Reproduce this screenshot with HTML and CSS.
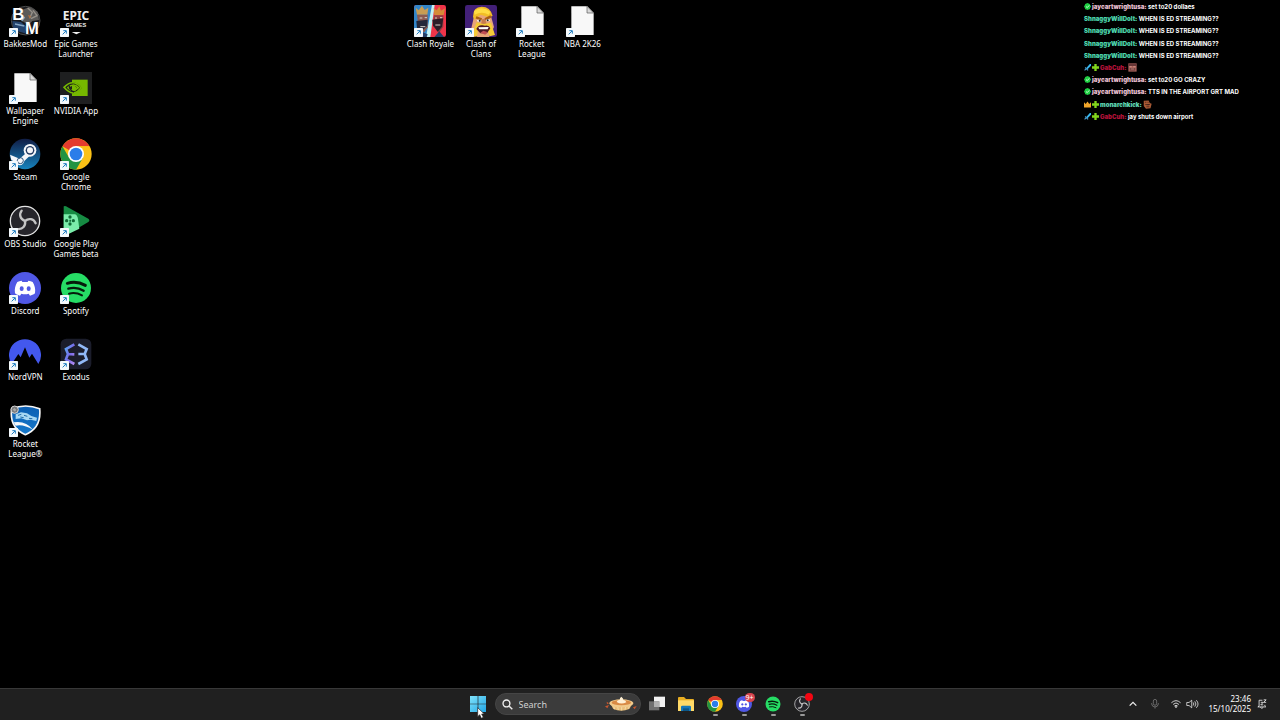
FILE: index.html
```
<!DOCTYPE html>
<html lang="en">
<head>
  <meta charset="utf-8">
  <title>Desktop</title>
  <link rel="stylesheet" href="styles.css">
</head>
<body>
  <!-- Shared icons -->
  <svg class="sprite" aria-hidden="true">
    <symbol id="shortcut" viewBox="0 0 27 27">
      <rect width="27" height="27" rx="2" fill="#f4f9fc"/>
      <path d="M8 19L18 9M10 8h9v9" fill="none" stroke="#1c7cc0" stroke-width="3"/>
    </symbol>
    <symbol id="file" viewBox="0 0 96 96">
      <path d="M16 4h48l19 19v67H16z" fill="#f8f8f8"/>
      <path d="M63 4v20h20z" fill="#d9d9d9" stroke="#555" stroke-width="2"/>
    </symbol>
    <symbol id="chrome" viewBox="0 0 96 96">
      <circle cx="48" cy="48" r="47" fill="#fbc116"/>
      <path d="M48 48L7.300 24.500A47 47 0 0 1 88.700 24.500H48z" fill="#e33b2e"/>
      <path d="M7.300 24.500A47 47 0 0 0 48 95L68.400 59.800 48 48 27.600 59.800z" fill="#229342"/>
      <path d="M48 24.500h40.700L68.400 59.800 48 48z" fill="#fbc116"/>
      <circle cx="48" cy="48" r="24" fill="#fff"/>
      <circle cx="48" cy="48" r="19" fill="#2b7de9"/>
    </symbol>
    <symbol id="discord" viewBox="0 0 96 96">
      <circle cx="48" cy="48" r="48" fill="#5058e5"/>
      <path d="M38 26c-5 1-9 2-13 4-6 10-9 20-7 34 5 4 10 6 15 7l4-6c7 2 15 2 22 0l4 6c5-1 10-3 15-7 2-14-1-24-7-34-4-2-8-3-13-4l-2 4h-16z" fill="#fff"/>
      <ellipse cx="38" cy="50" rx="6" ry="7" fill="#5058e5"/>
      <ellipse cx="59" cy="50" rx="6" ry="7" fill="#5058e5"/>
    </symbol>
    <symbol id="spotify" viewBox="0 0 96 96">
      <circle cx="48" cy="48" r="45" fill="#26dd65"/>
      <g fill="none" stroke="#061b0c" stroke-linecap="round">
        <path d="M22 34q28-8 54 6" stroke-width="9"/>
        <path d="M25 50q24-7 46 6" stroke-width="7"/>
        <path d="M27 65q20-5 39 5" stroke-width="6"/>
      </g>
    </symbol>
    <symbol id="obs" viewBox="0 0 96 96">
      <circle cx="48" cy="48" r="44" fill="#26252a" stroke="#e4e4e4" stroke-width="4"/>
      <g fill="none" stroke="#c4c4c4" stroke-width="7" stroke-linecap="round">
        <path id="blade" d="M48 48C34 43 29 29 38 17"/>
        <use href="#blade" transform="rotate(120 48 48)"/>
        <use href="#blade" transform="rotate(240 48 48)"/>
      </g>
    </symbol>
    <symbol id="verified" viewBox="0 0 12 12">
      <path d="M6 0l2 1 2 .5.500 2L12 6l-1.500 2.500-.5 2-2 .5-2 1-2-1-2-.5-.5-2L0 6l1.500-2.500.5-2L4 1z" fill="#1fcf43"/>
      <path d="M3.500 6l2 2 3.500-4" fill="none" stroke="#d9ffe0" stroke-width="1.500"/>
    </symbol>
    <symbol id="sword" viewBox="0 0 12 12">
      <path d="M12 0v3L6 9 4 7l6-7z" fill="#37b9f2"/>
      <path d="M2 6l5 5M4 8l-3 3" fill="none" stroke="#4a9ed0" stroke-width="2"/>
    </symbol>
    <symbol id="plus" viewBox="0 0 12 12">
      <path d="M4 0h4v4h4v4H8v4H4V8H0V4h4z" fill="#82d51c"/>
    </symbol>
    <symbol id="crown" viewBox="0 0 12 12">
      <path d="M0 2l3 3 3-4 3 4 3-3v9H0z" fill="#f0a52a"/>
    </symbol>
  </svg>

  <main class="desktop">
    <nav class="icons" aria-label="Desktop shortcuts">
      <a class="app col-1 row-1" href="#">
        <span class="app-icon">
          <svg viewBox="0 0 96 96">
            <circle cx="50" cy="47" r="43" fill="#17191d" stroke="#4b4b4b" stroke-width="3"/>
            <path d="M40 14l22-8 24 14 4 25-20 3-12 12-18-12z" fill="#5c5a58"/>
            <path d="M56 9l14 13-8 18M72 16l12 16-18 9" fill="none" stroke="#96918a" stroke-width="4"/>
            <path d="M10 48l26 3 18 16-6 18-34-10z" fill="#24436c"/>
            <path d="M18 57l28 6M38 48l9-12" stroke="#85a6c4" stroke-width="4"/>
            <path d="M57 30l9 3-4 8z" fill="#b36c39"/>
            <text class="bm" x="10" y="46">B</text>
            <text class="bm" x="48" y="87">M</text>
          </svg>
          <svg class="badge"><use href="#shortcut"/></svg>
        </span>
        <span class="app-name">BakkesMod</span>
      </a>
      <a class="app col-1 row-2" href="#">
        <span class="app-icon">
          <svg><use href="#file"/></svg>
          <svg class="badge"><use href="#shortcut"/></svg>
        </span>
        <span class="app-name">Wallpaper<br>Engine</span>
      </a>
      <a class="app col-1 row-3" href="#">
        <span class="app-icon">
          <svg viewBox="0 0 96 96">
            <defs>
              <linearGradient id="steam-bg" x2="0" y2="1">
                <stop stop-color="#111d45"/>
                <stop offset="1" stop-color="#1683bd"/>
              </linearGradient>
            </defs>
            <circle cx="48" cy="48" r="46" fill="url(#steam-bg)"/>
            <path d="M3 50l29 12 17-15 15 5-18 17c-2 14-19 17-25 5L7 66z" fill="#f5f7fa"/>
            <circle cx="63" cy="37" r="19" fill="#f5f7fa"/>
            <circle cx="63" cy="37" r="13" fill="#243c63"/>
            <circle cx="63" cy="37" r="9" fill="#f5f7fa"/>
            <circle cx="34" cy="68" r="9" fill="none" stroke="#28517b" stroke-width="3"/>
          </svg>
          <svg class="badge"><use href="#shortcut"/></svg>
        </span>
        <span class="app-name">Steam</span>
      </a>
      <a class="app col-1 row-4" href="#">
        <span class="app-icon">
          <svg><use href="#obs"/></svg>
          <svg class="badge"><use href="#shortcut"/></svg>
        </span>
        <span class="app-name">OBS Studio</span>
      </a>
      <a class="app col-1 row-5" href="#">
        <span class="app-icon">
          <svg><use href="#discord"/></svg>
          <svg class="badge"><use href="#shortcut"/></svg>
        </span>
        <span class="app-name">Discord</span>
      </a>
      <a class="app col-1 row-6" href="#">
        <span class="app-icon">
          <svg viewBox="0 0 96 96">
            <path d="M8 78A48 48 0 1 1 88 78L69 47l-8 12-13-31-13 30-7-10z" fill="#4358ee"/>
          </svg>
          <svg class="badge"><use href="#shortcut"/></svg>
        </span>
        <span class="app-name">NordVPN</span>
      </a>
      <a class="app col-1 row-7" href="#">
        <span class="app-icon">
          <svg viewBox="0 0 96 96">
            <defs>
              <linearGradient id="shield" x2="0" y2="1">
                <stop stop-color="#0b5eb2"/>
                <stop offset="1" stop-color="#1679cb"/>
              </linearGradient>
            </defs>
            <path d="M8 11Q50-5 92 11 98 69 49 89 0 68 8 11z" fill="url(#shield)" stroke="#f6f6f6" stroke-width="5"/>
            <path d="M20 28l16-6 18 3 13 8 17 5-2 10-17-4-11 2-17-6-17 2z" fill="#a6d7f3"/>
            <path d="M27 31l10-3M45 31l10 3M60 40l10 1M34 36l10 2" stroke="#216eab" stroke-width="3"/>
            <path d="M14 52q36-6 58 22-30-18-52-12z" fill="#f5f8fb"/>
            <circle cx="17" cy="14" r="11" fill="#77797b" stroke="#d5d5d5" stroke-width="3"/>
            <path d="M11 14l5-5 6 5-4 6z" fill="#aaa"/>
          </svg>
          <svg class="badge"><use href="#shortcut"/></svg>
        </span>
        <span class="app-name">Rocket<br>League®</span>
      </a>

      <a class="app col-2 row-1" href="#">
        <span class="app-icon">
          <svg viewBox="0 0 96 96">
            <text class="epic" x="48" y="46">EPIC</text>
            <text class="games" x="48" y="67">GAMES</text>
            <path d="M35 81h28l-14 7z" fill="#eee"/>
          </svg>
          <svg class="badge"><use href="#shortcut"/></svg>
        </span>
        <span class="app-name">Epic Games<br>Launcher</span>
      </a>
      <a class="app col-2 row-2" href="#">
        <span class="app-icon">
          <svg viewBox="0 0 96 96">
            <rect width="96" height="96" fill="#1e1f20"/>
            <path d="M36 23h47v49H36z" fill="#76b900"/>
            <path d="M36 31c14 0 24 8 29 17-7 9-17 16-29 16zM36 39v17c7 0 12-4 15-8-4-6-9-9-15-9z" fill="#18220d" fill-rule="evenodd"/>
            <g fill="none" stroke="#76b900" stroke-width="5">
              <path d="M12 46q27-28 51 1-23 32-51-1z"/>
              <path d="M24 47q17-16 31 0-17 17-31 0z"/>
            </g>
            <path d="M28 41q-1 14 14 19" fill="none" stroke="#1e1f20" stroke-width="4"/>
          </svg>
          <svg class="badge"><use href="#shortcut"/></svg>
        </span>
        <span class="app-name">NVIDIA App</span>
      </a>
      <a class="app col-2 row-3" href="#">
        <span class="app-icon">
          <svg><use href="#chrome"/></svg>
          <svg class="badge"><use href="#shortcut"/></svg>
        </span>
        <span class="app-name">Google<br>Chrome</span>
      </a>
      <a class="app col-2 row-4" href="#">
        <span class="app-icon">
          <svg viewBox="0 0 96 96">
            <path d="M11 5q2-3 7-1l67 37q6 5 0 10L19 90q-7 2-8-5z" fill="#168b43"/>
            <path d="M11 28h34q7 2 9 14l4 29-39 19q-8 1-8-6z" fill="#7bedab"/>
            <g fill="#116a37">
              <circle cx="30" cy="36" r="5"/>
              <circle cx="20" cy="47" r="5"/>
              <circle cx="40" cy="47" r="5"/>
              <circle cx="30" cy="57" r="5"/>
              <path d="M28 44h5v6h-5z"/>
            </g>
          </svg>
          <svg class="badge"><use href="#shortcut"/></svg>
        </span>
        <span class="app-name">Google Play<br>Games beta</span>
      </a>
      <a class="app col-2 row-5" href="#">
        <span class="app-icon">
          <svg><use href="#spotify"/></svg>
          <svg class="badge"><use href="#shortcut"/></svg>
        </span>
        <span class="app-name">Spotify</span>
      </a>
      <a class="app col-2 row-6" href="#">
        <span class="app-icon">
          <svg viewBox="0 0 96 96">
            <defs>
              <linearGradient id="exodus" x2="1" y2="1">
                <stop stop-color="#5aa9f3"/>
                <stop offset=".5" stop-color="#796be9"/>
                <stop offset="1" stop-color="#b48cf5"/>
              </linearGradient>
            </defs>
            <rect x="2" y="2" width="92" height="92" rx="17" fill="#1b1d2b"/>
            <g fill="none" stroke-width="8">
              <path d="M43 19L18 33l6 15-6 16 25 14M24 48l19 1" stroke="url(#exodus)"/>
              <path d="M55 19l25 14-6 15 6 16-25 14M74 48H55" stroke="#91b8f6"/>
            </g>
          </svg>
          <svg class="badge"><use href="#shortcut"/></svg>
        </span>
        <span class="app-name">Exodus</span>
      </a>

      <a class="app col-9 row-1" href="#">
        <span class="app-icon">
          <svg viewBox="0 0 96 96">
            <rect width="96" height="96" rx="7" fill="#ee3449"/>
            <path d="M0 7q0-7 7-7h48L38 96H7q-7 0-7-7z" fill="#3386c8"/>
            <path d="M54 0h8L49 96H36z" fill="#c2f2f3"/>
            <path d="M5 8l9 8 10-14 8 13 11-7-3 21H9z" fill="#c99d52"/>
            <path d="M9 29h32v38L31 82 14 74z" fill="#8b5a50"/>
            <path d="M7 48l34-4-2 20-12 10-18-5z" fill="#242738"/>
            <path d="M17 39h8M32 38h7M19 65h15" stroke="#d8d0c8" stroke-width="3"/>
            <path d="M59 9l9 7 8-12 5 13 12-7-4 20H61z" fill="#d58b38"/>
            <path d="M60 31h28v34L75 84 57 64z" fill="#8e4040"/>
            <path d="M55 44l33-4-4 25-13 15-14-19z" fill="#2b1c27"/>
            <path d="M63 39h6M78 38h7M64 60h15" stroke="#d8d0c8" stroke-width="3"/>
            <path d="M16 96l9-15 16 7-3 8zM61 96l15-17 14 17z" fill="#243f68"/>
          </svg>
          <svg class="badge"><use href="#shortcut"/></svg>
        </span>
        <span class="app-name">Clash Royale</span>
      </a>
      <a class="app col-10 row-1" href="#">
        <span class="app-icon">
          <svg viewBox="0 0 96 96">
            <rect width="96" height="96" rx="7" fill="#432078"/>
            <path d="M19 70L28 30 49 16l27 10 11 40-15 30H37z" fill="#e8a579"/>
            <path d="M24 35Q24 5 50 5t33 28l-11 4-25-8-19 15z" fill="#f1bd26"/>
            <path d="M27 18q25-18 49 2l-5 9q-20-12-42 0z" fill="#ffdc43"/>
            <path d="M33 37l17 6M60 43l18-9" stroke="#a85c14" stroke-width="7"/>
            <ellipse cx="42" cy="47" rx="6" ry="3" fill="#fff"/>
            <ellipse cx="69" cy="46" rx="6" ry="3" fill="#fff"/>
            <circle cx="44" cy="47" r="3" fill="#222"/>
            <circle cx="68" cy="46" r="3" fill="#222"/>
            <path d="M52 42l-4 15 9 3 8-4-5-14z" fill="#c77b50"/>
            <path d="M27 72l8-20 20 5 23-4 12 37-16 4-6-19-10 2-19-2-3 19-12 2z" fill="#f5cb37"/>
            <path d="M34 72q6-14 19-11l7 1q12-3 16 8l-10 15H46z" fill="#4d1825"/>
            <path d="M40 67l31-1-3 7H43z" fill="#fff"/>
            <path d="M46 83l9-6 12 4-6 8z" fill="#c24d53"/>
          </svg>
          <svg class="badge"><use href="#shortcut"/></svg>
        </span>
        <span class="app-name">Clash of<br>Clans</span>
      </a>
      <a class="app col-11 row-1" href="#">
        <span class="app-icon">
          <svg><use href="#file"/></svg>
          <svg class="badge"><use href="#shortcut"/></svg>
        </span>
        <span class="app-name">Rocket<br>League</span>
      </a>
      <a class="app col-12 row-1" href="#">
        <span class="app-icon">
          <svg><use href="#file"/></svg>
          <svg class="badge"><use href="#shortcut"/></svg>
        </span>
        <span class="app-name">NBA 2K26</span>
      </a>
    </nav>

    <!-- Chat overlay, floats over the wallpaper -->
    <section class="chat" aria-label="Chat">
      <p><svg><use href="#verified"/></svg><b class="jay">jaycartwrightusa:</b> set to20 dollaes</p>
      <p><b class="shnaggy">ShnaggyWillDoIt:</b> WHEN IS ED STREAMING??</p>
      <p><b class="shnaggy">ShnaggyWillDoIt:</b> WHEN IS ED STREAMING??</p>
      <p><b class="shnaggy">ShnaggyWillDoIt:</b> WHEN IS ED STREAMING??</p>
      <p><b class="shnaggy">ShnaggyWillDoIt:</b> WHEN IS ED STREAMING??</p>
      <p><svg><use href="#sword"/></svg><svg><use href="#plus"/></svg><b class="gab">GabCuh:</b>
        <svg class="emote" viewBox="0 0 24 24"><path d="M1 1h22v22H1z" fill="#a8625a"/><path d="M1 2h22v6H1zM5 13h14v7H5z" fill="#673636"/><path d="M4 10h6M14 10h6M7 16h10" stroke="#e0a698" stroke-width="2"/></svg></p>
      <p><svg><use href="#verified"/></svg><b class="jay">jaycartwrightusa:</b> set to20 GO CRAZY</p>
      <p><svg><use href="#verified"/></svg><b class="jay">jaycartwrightusa:</b> TTS IN THE AIRPORT GRT MAD</p>
      <p><svg><use href="#crown"/></svg><svg><use href="#plus"/></svg><b class="monarch">monarchkick:</b>
        <svg class="emote" viewBox="0 0 24 24"><path d="M2 2l13-1 3 7 5 2-3 12-12 1-6-7z" fill="#a85a35"/><path d="M5 6h4M12 6h3M6 12l8 1 5-2M9 18h8" stroke="#40221b" stroke-width="2"/></svg></p>
      <p><svg><use href="#sword"/></svg><svg><use href="#plus"/></svg><b class="gab">GabCuh:</b> jay shuts down airport</p>
    </section>
  </main>

  <footer class="taskbar">
    <div class="pinned">
      <button class="task" aria-label="Start">
        <svg viewBox="0 0 48 48">
          <defs>
            <linearGradient id="win" x2="1" y2="1">
              <stop stop-color="#80e2fa"/>
              <stop offset="1" stop-color="#22a6e6"/>
            </linearGradient>
          </defs>
          <path d="M0 0h23v23H0zM25 0h23v23H25zM0 25h23v23H0zM25 25h23v23H25z" fill="url(#win)"/>
        </svg>
        <svg class="cursor" viewBox="0 0 24 36"><path d="M2 2v27l6-6 5 11 6-3-5-10h8z" fill="#fff" stroke="#222" stroke-width="2"/></svg>
      </button>
      <label class="search">
        <svg class="glass" viewBox="0 0 32 32"><path d="M21 21l9 9" stroke="#eee" stroke-width="4"/><circle cx="13" cy="13" r="10" fill="none" stroke="#eee" stroke-width="4"/></svg>
        <input type="text" placeholder="Search" aria-label="Search">
        <svg class="pie" viewBox="0 0 96 48">
          <path d="M0 31l12-4-5 10zM84 34l11-4-6 10zM5 17l7 5-6 3z" fill="#c7562d"/>
          <path d="M15 21q33-18 68 0l-10 18q-25 10-48 0z" fill="#e8bd79"/>
          <path d="M26 31l3 9M38 32l2 10M50 33v10M62 32l-2 9M74 29l-4 9" stroke="#f5d9a8" stroke-width="3"/>
          <ellipse cx="49" cy="22" rx="36" ry="12" fill="#f1ca8b"/>
          <ellipse cx="49" cy="20" rx="29" ry="8" fill="#d98a45"/>
          <path d="M35 18q2-7 9-6 0-8 5-10 7 5 6 10 7 0 9 7-15 8-29-1z" fill="#fff0d5"/>
        </svg>
      </label>
      <button class="task" aria-label="Task view">
        <svg viewBox="0 0 48 48"><path d="M15 2h33v31H15z" fill="#f2f2f2"/><path d="M0 16h31v27H0z" fill="#6f6f6f"/><path d="M15 16h16v17H15z" fill="#b0b0b0"/></svg>
      </button>
      <button class="task" aria-label="File Explorer">
        <svg viewBox="0 0 48 48"><path d="M0 6q0-3 3-3h15l6 6h21q3 0 3 3v33H0z" fill="#e9ae22"/><path d="M0 13h48v32H0z" fill="#ffda68"/><path d="M9 45V33q0-4 4-4h22q4 0 4 4v12z" fill="#1678b9"/><path d="M15 37h18v8H15z" fill="#0d5686"/></svg>
      </button>
      <button class="task running" aria-label="Google Chrome"><svg><use href="#chrome"/></svg></button>
      <button class="task running" aria-label="Discord"><svg><use href="#discord"/></svg><span class="count">9+</span></button>
      <button class="task running" aria-label="Spotify"><svg><use href="#spotify"/></svg></button>
      <button class="task running" aria-label="OBS Studio"><svg><use href="#obs"/></svg><span class="recording"></span></button>
    </div>

    <div class="tray">
      <button aria-label="Show hidden icons"><svg viewBox="0 0 24 24"><path d="M4 16l8-8 8 8" stroke="#eee" stroke-width="3"/></svg></button>
      <button class="mic" aria-label="Microphone"><svg viewBox="0 0 24 24"><rect x="8" y="1" width="8" height="14" rx="4" stroke="#777"/><path d="M4 10v2q1 7 8 7t8-7v-2M12 19v4" stroke="#777"/></svg></button>
      <button class="net" aria-label="Network and volume">
        <svg viewBox="0 0 24 24"><path d="M1 9q11-10 22 0M5 13q7-7 14 0M8 17q4-4 8 0" stroke="#eee"/><circle cx="12" cy="19" r="2" fill="#eee"/></svg>
        <svg class="volume" viewBox="0 0 34 24"><path d="M2 8h6l7-6v20l-7-6H2zM19 8q3 4 0 8M23 5q6 7 0 14M27 2q9 10 0 20" stroke="#eee"/></svg>
      </button>
      <button class="clock"><time>23:46<br>15/10/2025</time></button>
      <button aria-label="Notifications"><svg viewBox="0 0 24 24"><path d="M13 3H5v14l-3 2h19l-2-2v-3M8 20q4 5 7 0M9 8h6l-6 6h6M16 2h6l-6 6h6" stroke="#eee"/></svg></button>
    </div>
  </footer>
</body>
</html>
```
FILE: styles.css
```
* {
  box-sizing: border-box;
}
body {
  margin: 0;
  min-height: 100vh;
  display: flex;
  flex-direction: column;
  background: #000;
  color: #fff;
  font-family: "Noto Sans", "Open Sans", sans-serif;
  overflow: hidden;
}
button {
  border: 0;
  padding: 0;
  background: none;
  color: inherit;
  font: inherit;
}
.sprite {
  position: absolute;
  width: 0;
  height: 0;
}

/* Desktop */
.desktop {
  position: relative;
  flex: 1;
  display: flex;
  padding: 0 14px 21px 0;
}
.icons {
  flex: 1;
  display: grid;
  grid-template-columns: repeat(25, minmax(0, 1fr));
  grid-template-rows: repeat(10, minmax(0, 1fr));
}
.col-1 { grid-column: 1; }
.col-2 { grid-column: 2; }
.col-9 { grid-column: 9; }
.col-10 { grid-column: 10; }
.col-11 { grid-column: 11; }
.col-12 { grid-column: 12; }
.row-1 { grid-row: 1; }
.row-2 { grid-row: 2; }
.row-3 { grid-row: 3; }
.row-4 { grid-row: 4; }
.row-5 { grid-row: 5; }
.row-6 { grid-row: 6; }
.row-7 { grid-row: 7; }
.app {
  display: flex;
  flex-direction: column;
  align-items: center;
  gap: 2px;
  padding-top: 5px;
  color: #fff;
  text-decoration: none;
}
.app-icon {
  position: relative;
  width: 32px;
  height: 32px;
}
.app-icon svg {
  display: block;
  width: 32px;
  height: 32px;
}
.app-icon .badge {
  position: absolute;
  left: 0;
  bottom: 0;
  width: 9px;
  height: 9px;
}
.app-name {
  font-size: 8px;
  line-height: 10px;
  text-align: center;
  white-space: nowrap;
}
.bm {
  fill: #fff;
  font: bold 50px "Liberation Sans", sans-serif;
}
.epic,
.games {
  fill: #eee;
  text-anchor: middle;
}
.epic {
  font: bold 36px "Noto Sans", sans-serif;
}
.games {
  font: bold 17px "Liberation Sans", sans-serif;
}

/* Chat */
.chat {
  position: absolute;
  top: 1px;
  right: 0;
  width: 196px;
  height: 122px;
  display: grid;
  grid-auto-rows: 1fr;
  align-items: center;
  font: bold 6px/12px Inter, sans-serif;
}
.chat p {
  margin: 0;
  white-space: nowrap;
}
.chat svg {
  width: 7px;
  height: 7px;
  margin-right: 1px;
  vertical-align: -1px;
}
.chat .emote {
  width: 9px;
  height: 9px;
  vertical-align: -2px;
}
.jay { color: #e8bfd0; }
.shnaggy { color: #4fd8b0; }
.gab { color: #b01238; }
.monarch { color: #5fd8b4; }

/* Taskbar */
.taskbar {
  display: grid;
  grid-template-columns: 1fr auto 1fr;
  height: 32px;
  padding-bottom: 1px;
  border-top: 1px solid #383838;
  background: #202020;
}
.pinned {
  grid-column: 2;
  display: flex;
  align-items: center;
}
.task {
  position: relative;
  width: 29px;
  height: 30px;
  display: grid;
  place-items: center;
}
.task svg {
  width: 16px;
  height: 16px;
}
.running::after {
  content: "";
  position: absolute;
  bottom: 3px;
  left: 12px;
  width: 5px;
  height: 2px;
  border-radius: 1px;
  background: #999;
}
.task .cursor {
  position: absolute;
  left: 13px;
  top: 18px;
  width: 8px;
  height: 12px;
}
.count,
.recording {
  position: absolute;
  top: 4px;
  right: 4px;
  border-radius: 5px;
}
.count {
  width: 10px;
  background: #d8444e;
  font-size: 7px;
  line-height: 9px;
  text-align: center;
}
.recording {
  width: 8px;
  height: 8px;
  background: #f40612;
}
.search {
  display: flex;
  align-items: center;
  gap: 6px;
  width: 146px;
  height: 22px;
  margin: 0 2px;
  padding: 0 3px 0 6px;
  border: 1px solid #454545;
  border-radius: 11px;
  background: #3b3b3b;
}
.glass {
  width: 11px;
  height: 11px;
}
.search input {
  flex: 1;
  min-width: 0;
  border: 0;
  padding: 0;
  outline: 0;
  background: none;
  color: #fff;
  font: 9px "Noto Sans", sans-serif;
}
.search input::placeholder {
  color: #d0d0d0;
}
.pie {
  width: 32px;
  height: 16px;
}
.tray {
  display: flex;
  justify-content: flex-end;
  align-items: center;
  padding-right: 13px;
}
.tray svg {
  display: block;
  width: 10px;
  height: 10px;
  fill: none;
  stroke-width: 2;
}
.mic {
  margin: 0 11px 0 12px;
}
.net {
  display: flex;
  gap: 5px;
}
.tray .volume {
  width: 13px;
}
.clock {
  margin: 0 6px 0 9px;
  font-size: 8px;
  line-height: 10px;
  text-align: right;
}
```
